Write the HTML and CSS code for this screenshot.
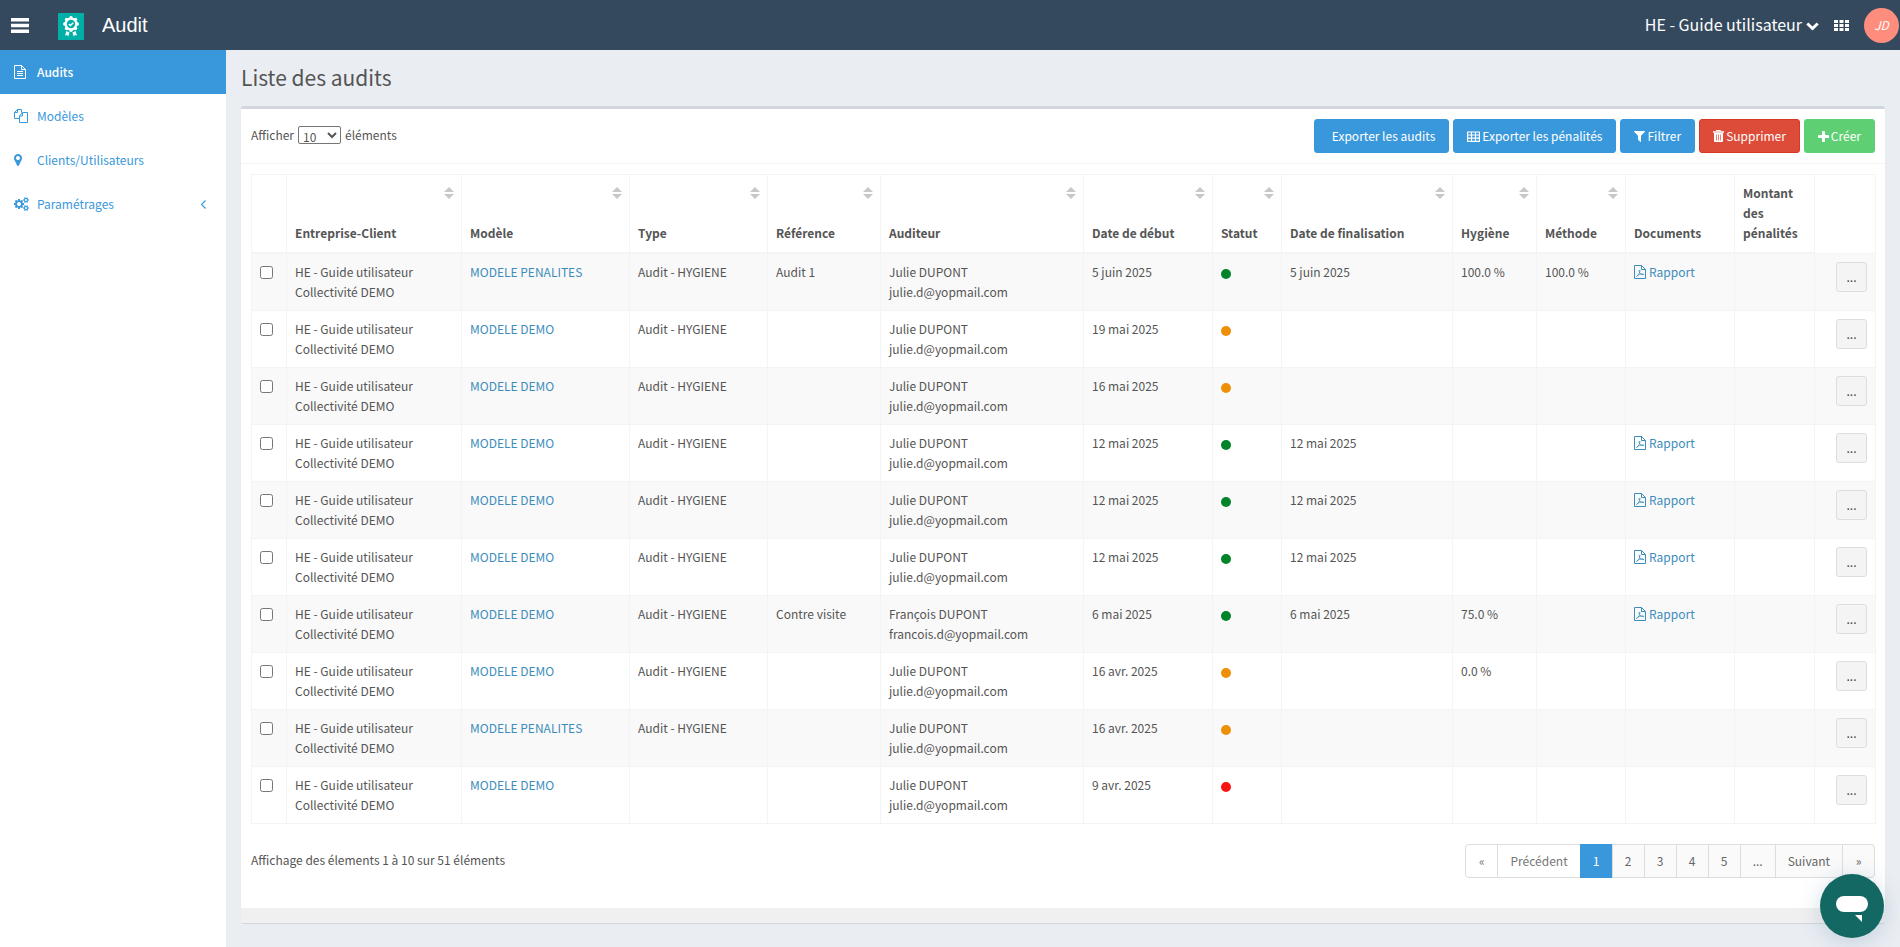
FILE: index.html
```html
<!DOCTYPE html>
<html lang="fr">
<head>
<meta charset="utf-8">
<title>Audit</title>
<link rel="stylesheet" href="styles.css">
</head>
<body>
<svg class="sprite" aria-hidden="true">
  <symbol id="i-pdf" viewBox="0 0 12 14"><path d="M.5.5h7l4 4v9H.5zM7.500.5v4h4" fill="none" stroke="currentColor"/><path d="M2.500 11.500c2-1 3.500-4 3.500-6.500M5 5c0 3 2 5 5 4.500M2.500 11.500C4 9.500 6.500 8.800 9.500 9" fill="none" stroke="currentColor" stroke-width=".8"/></symbol>
</svg>
<header class="topbar">
  <button class="icon-btn menu" aria-label="Menu"><svg width="18" height="15" viewBox="0 0 18 15"><path d="M0 0h18v3.500H0zM0 5.800h18v3.400H0zM0 11.500h18V15H0z" fill="currentColor"/></svg></button>
  <svg class="logo" width="26" height="27" viewBox="0 0 26 27"><rect width="26" height="27" rx="1" fill="#00b0a8"/><g fill="#fff"><circle cx="13" cy="11" r="6.500"/><circle cx="13" cy="4.800" r="1.800"/><circle cx="17.400" cy="6.600" r="1.800"/><circle cx="19.200" cy="11" r="1.800"/><circle cx="17.400" cy="15.400" r="1.800"/><circle cx="13" cy="17.200" r="1.800"/><circle cx="8.600" cy="15.400" r="1.800"/><circle cx="6.800" cy="11" r="1.800"/><circle cx="8.600" cy="6.600" r="1.800"/><path d="M8.500 18l3 1.500-1.200 4-1.300-1.500-2 .5zM17.500 18l-3 1.500 1.200 4 1.300-1.500 2 .5z"/></g><circle cx="13" cy="11" r="4.200" fill="#00b0a8"/><path d="M10.800 11l1.600 1.600 2.900-2.900" fill="none" stroke="#fff" stroke-width="1.400"/></svg>
  <span class="brand">Audit</span>
  <button class="org">HE - Guide utilisateur<svg width="13" height="9" viewBox="0 0 13 9"><path d="M1.300 1.500l5.200 5 5.200-5" fill="none" stroke="currentColor" stroke-width="3"/></svg></button>
  <button class="icon-btn apps" aria-label="Applications"><svg width="15" height="11" viewBox="0 0 15 11"><path d="M0 0h4v3H0zM5.500 0h4v3h-4zM11 0h4v3h-4zM0 4h4v3H0zM5.500 4h4v3h-4zM11 4h4v3h-4zM0 8h4v3H0zM5.500 8h4v3h-4zM11 8h4v3h-4z" fill="currentColor"/></svg></button>
  <button class="avatar">JD</button>
</header>
<div class="layout">
  <nav class="sidebar">
    <a class="nav-link active" href="#"><svg width="12" height="14" viewBox="0 0 12 14"><path d="M.5.500h7l4 4v9H.5zM7.500.5v4h4M3 6.500h6M3 8.500h6M3 10.500h6" fill="none" stroke="currentColor"/></svg><span>Audits</span></a>
    <a class="nav-link" href="#"><svg width="14" height="14" viewBox="0 0 14 14"><path d="M5.500 9.500h-5v-6l3-3h4v3M3.500.500v3h-3M5.500 7l3-3.500h5v10h-8zM8.500 3.500V7h-3" fill="none" stroke="currentColor"/></svg><span>Modèles</span></a>
    <a class="nav-link" href="#"><svg width="8" height="14" viewBox="384 128 1024 1536"><path d="M1152 640q0-106-75-181t-181-75-181 75-75 181 75 181 181 75 181-75 75-181zm256 0q0 109-33 179l-364 774q-16 33-47.500 52t-67.500 19-67.500-19-46.500-52l-365-774q-33-70-33-179 0-212 150-362t362-150 362 150 150 362z" fill="currentColor"/></svg><span>Clients/Utilisateurs</span></a>
    <a class="nav-link" href="#"><svg width="15" height="14" viewBox="0 0 1920 1792"><path fill="currentColor" d="M896 896q0-106-75-181t-181-75-181 75-75 181 75 181 181 75 181-75 75-181zm768 512q0-52-38-90t-90-38-90 38-38 90q0 53 37.500 90.500t90.500 37.500 90.500-37.500 37.500-90.500zm0-1024q0-52-38-90t-90-38-90 38-38 90q0 53 37.500 90.500t90.500 37.500 90.500-37.500 37.500-90.500zm-384 421v185q0 10-7 19.500t-16 10.500l-155 24q-11 35-32 76 34 48 90 115 7 11 7 20 0 12-7 19-23 30-82.500 89.500t-78.500 59.500q-11 0-21-7l-115-90q-37 19-77 31-11 108-23 155-7 24-30 24h-186q-11 0-20-7.500t-10-17.500l-23-153q-34-10-75-31l-118 89q-7 7-20 7-11 0-21-8-144-133-144-160 0-9 7-19 10-14 41-53t47-61q-23-44-35-82l-152-24q-10-1-17-9.500t-7-19.500v-185q0-10 7-19.500t16-10.500l155-24q11-35 32-76-34-48-90-115-7-11-7-20 0-12 7-20 22-30 82-89t79-59q11 0 21 7l115 90q34-18 77-32 11-108 23-154 7-24 30-24h186q11 0 20 7.500t10 17.500l23 153q34 10 75 31l118-89q8-7 20-7 11 0 21 8 144 133 144 160 0 8-7 19-12 16-42 54t-45 60q23 48 34 82l152 23q10 2 17 10.500t7 19.500zm640 533v140q0 16-149 31-12 27-30 52 51 113 51 138 0 4-4 7-122 71-124 71-8 0-46-47t-52-68q-20 2-30 2t-30-2q-14 21-52 68t-46 47q-2 0-124-71-4-3-4-7 0-25 51-138-18-25-30-52-149-15-149-31v-140q0-16 149-31 13-29 30-52-51-113-51-138 0-4 4-7 4-2 35-20t59-34 30-16q8 0 46 46.500t52 67.500q20-2 30-2t30 2q51-71 92-112l6-2q4 0 124 70 4 3 4 7 0 25-51 138 17 23 30 52 149 15 149 31zm0-1024v140q0 16-149 31-12 27-30 52 51 113 51 138 0 4-4 7-122 71-124 71-8 0-46-47t-52-68q-20 2-30 2t-30-2q-14 21-52 68t-46 47q-2 0-124-71-4-3-4-7 0-25 51-138-18-25-30-52-149-15-149-31v-140q0-16 149-31 13-29 30-52-51-113-51-138 0-4 4-7 4-2 35-20t59-34 30-16q8 0 46 46.500t52 67.500q20-2 30-2t30 2q51-71 92-112l6-2q4 0 124 70 4 3 4 7 0 25-51 138 17 23 30 52 149 15 149 31z"/></svg><span>Paramétrages</span><svg class="chevron" width="5" height="9" viewBox="0 0 5 9"><path d="M4.500.5l-4 4 4 4" fill="none" stroke="currentColor" stroke-width="1.200"/></svg></a>
  </nav>
  <main class="content">
    <h1>Liste des audits</h1>
    <section class="box">
      <div class="box-header">
        <label class="length">Afficher <select><option>10</option><option>25</option><option>50</option></select> éléments</label>
        <div class="actions">
          <button class="btn blue lead">Exporter les audits</button>
          <button class="btn blue"><svg width="13" height="11" viewBox="0 0 13 11"><path d="M.6 1h11.800v9.400H.6zM.6 4h11.800M.6 7.200h11.800M4.500 1v9.400M8.500 1v9.400" fill="none" stroke="currentColor" stroke-width="1.200"/></svg>Exporter les pénalités</button>
          <button class="btn blue"><svg width="11" height="11" viewBox="192 256 1408 1408"><path d="M1595 295q17 41-14 70l-493 493v742q0 42-39 59-13 5-25 5-27 0-45-19l-256-256q-19-19-19-45v-486l-493-493q-31-29-14-70 17-39 59-39h1280q42 0 59 39z" fill="currentColor"/></svg>Filtrer</button>
          <button class="btn red"><svg width="11" height="12" viewBox="0 0 11 12"><path d="M3.500 1.500v-1h4v1" fill="none" stroke="currentColor"/><path d="M0 1.300h11v1.400H0zM1 3h9v8q0 1-1 1H2q-1 0-1-1z" fill="currentColor"/><path d="M3.500 4.500v6M5.500 4.500v6M7.500 4.500v6" fill="none" stroke="#dd4b39" stroke-width=".7"/></svg>Supprimer</button>
          <button class="btn green"><svg width="11" height="11" viewBox="192 128 1408 1408"><path d="M1600 736v192q0 40-28 68t-68 28h-416v416q0 40-28 68t-68 28h-192q-40 0-68-28t-28-68v-416h-416q-40 0-68-28t-28-68v-192q0-40 28-68t68-28h416v-416q0-40 28-68t68-28h192q40 0 68 28t28 68v416h416q40 0 68 28t28 68z" fill="currentColor"/></svg>Créer</button>
        </div>
      </div>
      <div class="box-body">
        <table class="audits">
          <colgroup><col class="c-check"><col class="c-client"><col class="c-model"><col class="c-type"><col class="c-ref"><col class="c-auditor"><col class="c-start"><col class="c-status"><col class="c-end"><col class="c-hyg"><col class="c-meth"><col class="c-docs"><col class="c-amount"><col class="c-more"></colgroup>
          <thead><tr><th></th><th class="sort">Entreprise-Client</th><th class="sort">Modèle</th><th class="sort">Type</th><th class="sort">Référence</th><th class="sort">Auditeur</th><th class="sort">Date de début</th><th class="sort">Statut</th><th class="sort">Date de finalisation</th><th class="sort">Hygiène</th><th class="sort">Méthode</th><th>Documents</th><th>Montant des pénalités</th><th></th></tr></thead>
          <tbody>
            <tr><td><input type="checkbox" aria-label="Sélectionner"></td><td>HE - Guide utilisateur<br>Collectivité DEMO</td><td><a href="#">MODELE PENALITES</a></td><td>Audit - HYGIENE</td><td>Audit 1</td><td>Julie DUPONT<br>julie.d@yopmail.com</td><td>5 juin 2025</td><td><span class="dot done"></span></td><td>5 juin 2025</td><td>100.0 %</td><td>100.0 %</td><td><a href="#"><svg class="pdf"><use href="#i-pdf"/></svg>Rapport</a></td><td></td><td><button class="more">...</button></td></tr>
            <tr><td><input type="checkbox" aria-label="Sélectionner"></td><td>HE - Guide utilisateur<br>Collectivité DEMO</td><td><a href="#">MODELE DEMO</a></td><td>Audit - HYGIENE</td><td></td><td>Julie DUPONT<br>julie.d@yopmail.com</td><td>19 mai 2025</td><td><span class="dot progress"></span></td><td></td><td></td><td></td><td></td><td></td><td><button class="more">...</button></td></tr>
            <tr><td><input type="checkbox" aria-label="Sélectionner"></td><td>HE - Guide utilisateur<br>Collectivité DEMO</td><td><a href="#">MODELE DEMO</a></td><td>Audit - HYGIENE</td><td></td><td>Julie DUPONT<br>julie.d@yopmail.com</td><td>16 mai 2025</td><td><span class="dot progress"></span></td><td></td><td></td><td></td><td></td><td></td><td><button class="more">...</button></td></tr>
            <tr><td><input type="checkbox" aria-label="Sélectionner"></td><td>HE - Guide utilisateur<br>Collectivité DEMO</td><td><a href="#">MODELE DEMO</a></td><td>Audit - HYGIENE</td><td></td><td>Julie DUPONT<br>julie.d@yopmail.com</td><td>12 mai 2025</td><td><span class="dot done"></span></td><td>12 mai 2025</td><td></td><td></td><td><a href="#"><svg class="pdf"><use href="#i-pdf"/></svg>Rapport</a></td><td></td><td><button class="more">...</button></td></tr>
            <tr><td><input type="checkbox" aria-label="Sélectionner"></td><td>HE - Guide utilisateur<br>Collectivité DEMO</td><td><a href="#">MODELE DEMO</a></td><td>Audit - HYGIENE</td><td></td><td>Julie DUPONT<br>julie.d@yopmail.com</td><td>12 mai 2025</td><td><span class="dot done"></span></td><td>12 mai 2025</td><td></td><td></td><td><a href="#"><svg class="pdf"><use href="#i-pdf"/></svg>Rapport</a></td><td></td><td><button class="more">...</button></td></tr>
            <tr><td><input type="checkbox" aria-label="Sélectionner"></td><td>HE - Guide utilisateur<br>Collectivité DEMO</td><td><a href="#">MODELE DEMO</a></td><td>Audit - HYGIENE</td><td></td><td>Julie DUPONT<br>julie.d@yopmail.com</td><td>12 mai 2025</td><td><span class="dot done"></span></td><td>12 mai 2025</td><td></td><td></td><td><a href="#"><svg class="pdf"><use href="#i-pdf"/></svg>Rapport</a></td><td></td><td><button class="more">...</button></td></tr>
            <tr><td><input type="checkbox" aria-label="Sélectionner"></td><td>HE - Guide utilisateur<br>Collectivité DEMO</td><td><a href="#">MODELE DEMO</a></td><td>Audit - HYGIENE</td><td>Contre visite</td><td>François DUPONT<br>francois.d@yopmail.com</td><td>6 mai 2025</td><td><span class="dot done"></span></td><td>6 mai 2025</td><td>75.0 %</td><td></td><td><a href="#"><svg class="pdf"><use href="#i-pdf"/></svg>Rapport</a></td><td></td><td><button class="more">...</button></td></tr>
            <tr><td><input type="checkbox" aria-label="Sélectionner"></td><td>HE - Guide utilisateur<br>Collectivité DEMO</td><td><a href="#">MODELE DEMO</a></td><td>Audit - HYGIENE</td><td></td><td>Julie DUPONT<br>julie.d@yopmail.com</td><td>16 avr. 2025</td><td><span class="dot progress"></span></td><td></td><td>0.0 %</td><td></td><td></td><td></td><td><button class="more">...</button></td></tr>
            <tr><td><input type="checkbox" aria-label="Sélectionner"></td><td>HE - Guide utilisateur<br>Collectivité DEMO</td><td><a href="#">MODELE PENALITES</a></td><td>Audit - HYGIENE</td><td></td><td>Julie DUPONT<br>julie.d@yopmail.com</td><td>16 avr. 2025</td><td><span class="dot progress"></span></td><td></td><td></td><td></td><td></td><td></td><td><button class="more">...</button></td></tr>
            <tr><td><input type="checkbox" aria-label="Sélectionner"></td><td>HE - Guide utilisateur<br>Collectivité DEMO</td><td><a href="#">MODELE DEMO</a></td><td></td><td></td><td>Julie DUPONT<br>julie.d@yopmail.com</td><td>9 avr. 2025</td><td><span class="dot late"></span></td><td></td><td></td><td></td><td></td><td></td><td><button class="more">...</button></td></tr>
          </tbody>
        </table>
        <div class="table-footer">
          <p>Affichage des élements 1 à 10 sur 51 éléments</p>
          <nav class="pages" aria-label="Pagination"><a class="off" href="#">«</a><a class="off" href="#">Précédent</a><a class="current" href="#">1</a><a href="#">2</a><a href="#">3</a><a href="#">4</a><a href="#">5</a><a href="#">...</a><a href="#">Suivant</a><a href="#">»</a></nav>
        </div>
      </div>
      <div class="box-footer"></div>
    </section>
  </main>
</div>
<button class="chat" aria-label="Discussion"><svg width="32" height="26" viewBox="0 0 32 26"><rect width="32" height="16" rx="8" fill="#fff"/><path d="M19 19h7v7z" fill="#fff"/></svg></button>
</body>
</html>
```
FILE: styles.css
```css
* { box-sizing: border-box; }
body {
  margin: 0;
  min-height: 100vh;
  display: flex;
  flex-direction: column;
  background: #eaeef3;
  color: #555;
  font: 12px/20px "Noto Sans CJK SC", "Noto Sans", sans-serif;
}
button, select { font: inherit; color: inherit; }
button { border: 0; background: none; padding: 0; }
a { color: #3c8dbc; text-decoration: none; }
.sprite { position: absolute; width: 0; height: 0; }

.topbar {
  display: flex;
  align-items: center;
  height: 50px;
  padding: 0 1px 0 11px;
  background: #34495e;
  color: #fff;
}
.icon-btn { display: flex; }
.logo { margin-left: 29px; margin-top: 3px; }
.brand { margin-left: 18px; font: 20px/50px "Liberation Sans", Arial, sans-serif; }
.org {
  display: flex;
  align-items: center;
  gap: 4px;
  margin-left: auto;
  padding-bottom: 2px;
  font-size: 16px;
}
.org svg { margin-top: 4px; }
.apps { margin: 0 15px; }
.avatar {
  width: 35px;
  height: 35px;
  border-radius: 50%;
  background: #ff8d7e;
  font-style: italic;
}

.layout { flex: 1; display: flex; }
.sidebar { width: 226px; flex: none; background: #fff; }
.nav-link {
  display: grid;
  grid-template-columns: 15px 1fr auto;
  align-items: center;
  height: 44px;
  padding: 0 20px 0 14px;
  color: #3998dc;
}
.nav-link span { margin-left: 8px; }
.nav-link.active { background: #3998dc; color: #fff; font-weight: 500; }

.content { flex: 1; min-width: 0; padding: 14px 15px 24px; }
h1 { margin: 0 0 16px; font-size: 21px; line-height: 26px; font-weight: 400; }
.box {
  background: #fff;
  border-top: 3px solid #d2d6de;
  border-radius: 3px;
  box-shadow: 0 1px 1px rgba(0, 0, 0, .1);
}
.box-header {
  display: flex;
  align-items: center;
  justify-content: space-between;
  padding: 10px;
  border-bottom: 1px solid #f4f4f4;
}
.length { display: flex; align-items: center; gap: 4px; padding-bottom: 2px; }
.length select {
  width: 43px;
  height: 18px;
  padding: 0;
  border: 1px solid #767676;
  border-radius: 2px;
  background: #fff;
  line-height: 16px;
}
.actions { display: flex; gap: 4px; }
.btn {
  display: flex;
  align-items: center;
  gap: 2px;
  height: 34px;
  padding: 0 13px;
  border: 1px solid #3998dc;
  border-radius: 3px;
  color: #fff;
}
.blue { background: #3998dc; }
.lead { padding-left: 17px; }
.red { background: #dd4b39; border-color: #d73925; }
.green { background: #5fcf74; border-color: #5fcf74; }

.box-body { padding: 10px 10px 30px; }
.audits { width: 100%; table-layout: fixed; border-collapse: collapse; }
.audits th, .audits td {
  padding: 8px;
  border: 1px solid #f4f4f4;
  text-align: left;
  vertical-align: top;
}
.audits th {
  padding-bottom: 9px;
  vertical-align: bottom;
  border-bottom-width: 2px;
  font-weight: 700;
}
.audits th:last-child { border-bottom-width: 1px; }
.audits tbody tr:nth-child(odd) { background: #f9f9f9; }
.audits input { display: block; margin: 4px 0 0; }
.c-check { width: 35px; }
.c-client { width: 175px; }
.c-model { width: 168px; }
.c-type { width: 138px; }
.c-ref { width: 113px; }
.c-auditor { width: 203px; }
.c-start { width: 129px; }
.c-status { width: 69px; }
.c-end { width: 171px; }
.c-hyg { width: 84px; }
.c-meth { width: 89px; }
.c-docs { width: 109px; }
.c-amount { width: 80px; }
.c-more { width: 61px; }
.sort { position: relative; }
.sort::before, .sort::after {
  content: "";
  position: absolute;
  right: 7px;
  border: 5px solid transparent;
}
.sort::before { top: 7px; border-bottom-color: #c8c8c8; }
.sort::after { top: 19px; border-top-color: #c8c8c8; }
.dot { display: block; width: 10px; height: 10px; margin-top: 7px; border-radius: 50%; }
.done { background: #008329; }
.progress { background: #ee8f08; }
.late { background: #f91414; }
.pdf { width: 12px; height: 14px; margin-right: 3px; vertical-align: -2px; }
.more {
  display: block;
  width: 31px;
  height: 30px;
  margin-left: auto;
  border: 1px solid #ddd;
  border-radius: 3px;
  background: #f4f4f4;
  color: #444;
}

.table-footer { display: flex; justify-content: space-between; padding-top: 20px; }
.table-footer p { margin: 6px 0 0; }
.pages { display: flex; }
.pages a {
  min-width: 33px;
  height: 34px;
  padding: 6px 12px;
  border: 1px solid #ddd;
  margin-left: -1px;
  background: #fafafa;
  color: #666;
  text-align: center;
}
.pages a:first-child { border-radius: 4px 0 0 4px; }
.pages a:last-child { border-radius: 0 4px 4px 0; }
.pages .off { background: #fff; color: #777; }
.pages .current { background: #3998dc; border-color: #3998dc; color: #fff; }
.box-footer { height: 15px; background: #f0f0f0; border-radius: 0 0 3px 3px; }

.chat {
  position: fixed;
  right: 16px;
  bottom: 9px;
  display: flex;
  align-items: center;
  justify-content: center;
  width: 64px;
  height: 64px;
  padding-top: 6px;
  border-radius: 50%;
  background: #146863;
  box-shadow: 0 4px 24px rgba(30, 80, 120, .2);
}
```
